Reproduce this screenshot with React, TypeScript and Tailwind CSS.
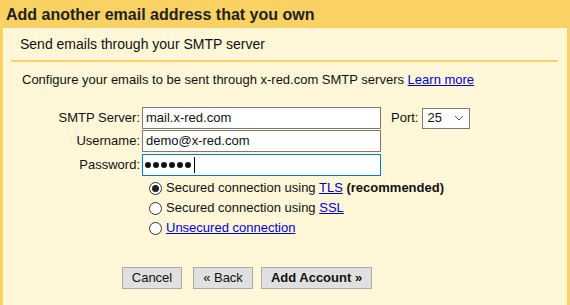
import React from "react";

function Radio({ checked }: { checked?: boolean }) {
  return (
    <span className="w-[13px] h-[13px] rounded-full border border-[#333] bg-white flex items-center justify-center shrink-0">
      {checked && <span className="w-[7px] h-[7px] rounded-full bg-[#222]" />}
    </span>
  );
}

function Field({ label, children }: { label: string; children: React.ReactNode }) {
  return (
    <div className="flex items-center h-[22px]">
      <div className="w-[139px] text-right pr-[2px]">{label}</div>
      {children}
    </div>
  );
}

export default function App() {
  return (
    <div
      className="w-[570px] h-[305px] bg-[#fad163] flex flex-col text-[13px] text-[#111] overflow-hidden"
      style={{ fontFamily: '"Liberation Sans", Arial, sans-serif' }}
    >
      <div className="h-[28px] pl-[6px] pt-[5px] text-[16px] leading-[20px] font-bold text-[#222]">
        Add another email address that you own
      </div>
      <div className="mx-[3px] flex-1 bg-[#fff7d7] flex flex-col">
        <div className="pt-[8px] pl-[17px] text-[14px] leading-[16px]">Send emails through your SMTP server</div>
        <div className="mt-[8px] ml-[8px] mr-[9px] h-[2px] bg-[#fad163]" />
        <div className="mt-[10px] pl-[19px] leading-[16px]">
          Configure your emails to be sent through x-red.com SMTP servers{" "}
          <a href="#" className="text-[#0000cc] underline">
            Learn more
          </a>
        </div>

        <div className="mt-[19px] flex flex-col">
          <Field label="SMTP Server:">
            <div className="w-[239px] h-[22px] border border-[#7a7a7a] bg-white pl-[3px] leading-[20px]">
              mail.x-red.com
            </div>
            <span className="ml-[10px]">Port:</span>
            <div className="ml-[4px] w-[48px] h-[21px] border border-[#7a7a7a] bg-white flex items-center justify-between pl-[4px] pr-[5px]">
              <span>25</span>
              <svg width="10" height="6" viewBox="0 0 10 6" fill="none">
                <path d="M1 1l4 4 4-4" stroke="#555" strokeWidth="1" />
              </svg>
            </div>
          </Field>
          <div className="mt-[1px]">
            <Field label="Username:">
              <div className="w-[239px] h-[22px] border border-[#7a7a7a] bg-white pl-[3px] leading-[20px]">
                demo@x-red.com
              </div>
            </Field>
          </div>
          <div className="mt-[2px]">
            <Field label="Password:">
              <div className="w-[239px] h-[22px] border border-[#0078d7] bg-white pl-[2px] flex items-center gap-[2px]">
                {[0, 1, 2, 3, 4, 5].map((i) => (
                  <span key={i} className="w-[6px] h-[6px] rounded-full bg-[#111]" />
                ))}
                <span className="ml-[1px] w-px h-[16px] bg-black" />
              </div>
            </Field>
          </div>
        </div>

        <div className="mt-[2px] ml-[146px] flex flex-col">
          <label className="flex items-center gap-[4px] h-[20px]">
            <Radio checked />
            <span>
              Secured connection using{" "}
              <a href="#" className="text-[#0000cc] underline">TLS</a>{" "}
              <b>(recommended)</b>
            </span>
          </label>
          <label className="flex items-center gap-[4px] h-[20px]">
            <Radio />
            <span>
              Secured connection using{" "}
              <a href="#" className="text-[#0000cc] underline">SSL</a>
            </span>
          </label>
          <label className="flex items-center gap-[4px] h-[20px]">
            <Radio />
            <a href="#" className="text-[#0000cc] underline">Unsecured connection</a>
          </label>
        </div>

        <div className="mt-[29px] ml-[119px] flex">
          <button className="w-[60px] h-[22px] bg-[#e0e0e0] border border-[#aaa] text-[#111]">Cancel</button>
          <button className="ml-[11px] w-[60px] h-[22px] bg-[#e0e0e0] border border-[#aaa] text-[#111]">« Back</button>
          <button className="ml-[8px] w-[111px] h-[22px] bg-[#e0e0e0] border border-[#aaa] text-[#111] font-bold">
            Add Account »
          </button>
        </div>
      </div>
    </div>
  );
}
